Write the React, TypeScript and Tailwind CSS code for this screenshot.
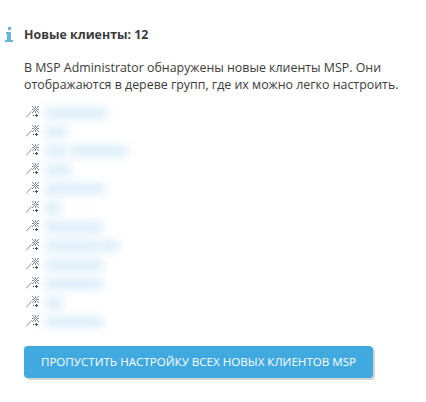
const rows: [string, string][] = [
  ["w-[62px]", ""],
  ["w-[22px]", ""],
  ["w-[22px]", "w-[56px] ml-[4px]"],
  ["w-[26px]", ""],
  ["w-[60px]", ""],
  ["w-[16px]", ""],
  ["w-[58px]", ""],
  ["w-[54px]", "w-[20px] ml-[0px]"],
  ["w-[58px]", ""],
  ["w-[58px]", ""],
  ["w-[18px]", ""],
  ["w-[58px]", ""],
];

function Wand() {
  return (
    <svg width="13" height="12" viewBox="0 0 13 12" shapeRendering="crispEdges" className="block shrink-0 -translate-y-[1px]">
      <path d="M0 11.5 L5.5 5.5" stroke="#8b929a" strokeWidth="1" shapeRendering="auto" fill="none" />
      <path d="M6 0h1v1H6zM9 0h1v2H9zM12 0h1v1h-1zM7 1h1v1H7zM11 1h1v1h-1zM8 2h1v1H8zM10 2h1v1h-1zM6 3h2v1H6zM11 3h2v1h-2zM9 3h1v1H9zM8 4h1v1H8zM10 4h1v1h-1zM7 5h1v1H7zM11 5h1v1h-1zM9 5h1v2H9zM6 6h1v1H6zM12 6h1v1h-1z" fill="#7f8893" />
      <path d="M7 9h1v1H7zM10 8h1v3h-1zM9 9h3v1H9z" fill="#3f4a56" />
    </svg>
  );
}

export default function App() {
  return (
    <div className="w-[426px] h-[402px] bg-white overflow-hidden relative font-['Open_Sans','Noto_Sans',sans-serif] text-[#3b3b3b]">
      <div className="flex pt-[26px]">
        <div className="w-[24px] shrink-0 flex justify-start pl-[5px] pt-[1px]">
          <svg width="8" height="15" viewBox="0 0 8 15" shapeRendering="crispEdges" className="block">
            <path d="M2.5 0h3v3h-3zM1 5h5v8h2v2H0v-2h2V7H1z" fill="#6ab4dc" />
          </svg>
        </div>
        <div className="flex-1 min-w-0">
          <div className="h-[18px] leading-[18px] text-[12.4px] font-bold">Новые клиенты: 12</div>
          <div className="mt-[15px] text-[12.4px] leading-[17px] whitespace-nowrap">
            <div>В MSP Administrator обнаружены новые клиенты MSP. Они</div>
            <div>отображаются в дереве групп, где их можно легко настроить.</div>
          </div>
          <div className="mt-[10px] flex flex-col">
            {rows.map(([a, b], i) => (
              <div key={i} className="h-[19px] flex items-center pl-[2px]">
                <Wand />
                <div className={`${a} ml-[6px] h-[10px] bg-[#d6ebf8] blur-[5px]`} />
                {b && <div className={`${b} h-[10px] bg-[#d6ebf8] blur-[5px]`} />}
              </div>
            ))}
          </div>
          <button className="mt-[15px] block w-[349px] h-[32px] rounded-[4px] bg-[#3fa9e0] text-white text-[11.6px] whitespace-nowrap shadow-[2px_2px_0_#d4d4d4]">
            ПРОПУСТИТЬ НАСТРОЙКУ ВСЕХ НОВЫХ КЛИЕНТОВ MSP
          </button>
        </div>
      </div>
    </div>
  );
}
